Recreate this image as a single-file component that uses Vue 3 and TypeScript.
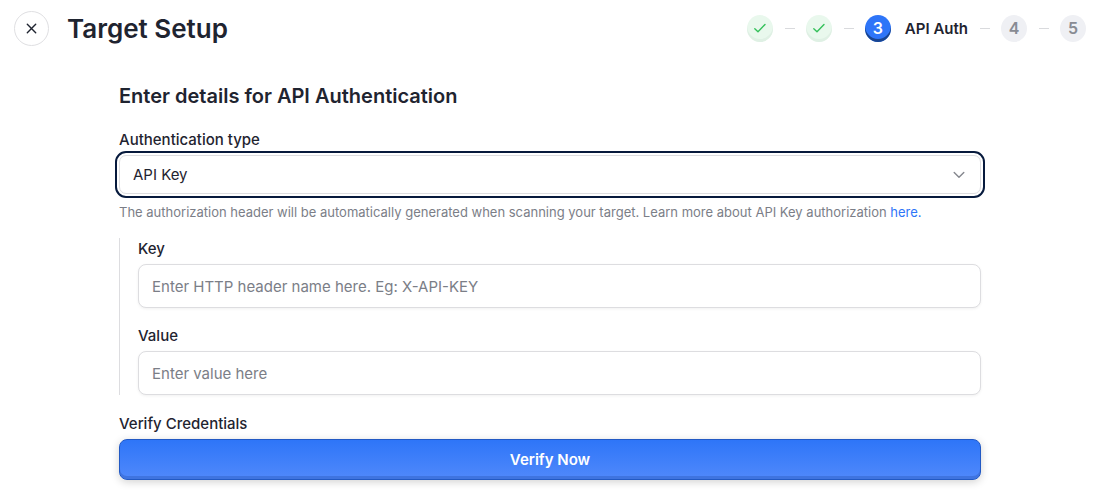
<script setup lang="ts">
import { ref } from 'vue'

interface Step {
  id: number
  state: 'done' | 'current' | 'todo'
  label?: string
}

const steps: Step[] = [
  { id: 1, state: 'done' },
  { id: 2, state: 'done' },
  { id: 3, state: 'current', label: 'API Auth' },
  { id: 4, state: 'todo' },
  { id: 5, state: 'todo' },
]

const authType = ref('API Key')
const headerName = ref('')
const headerValue = ref('')
</script>

<template>
  <div class="page">
    <header class="topbar">
      <button class="close" type="button" aria-label="Close">
        <svg width="11" height="11" viewBox="0 0 11 11" fill="none" stroke="currentColor" stroke-width="1.4" stroke-linecap="round">
          <path d="M1.3 1.3 9.7 9.7M9.7 1.3 1.3 9.7" />
        </svg>
      </button>
      <h1>Target Setup</h1>
      <ol class="steps">
        <li v-for="step in steps" :key="step.id" class="step">
          <span class="badge" :class="step.state">
            <svg v-if="step.state === 'done'" width="14" height="12" viewBox="0 0 14 12" fill="none" stroke="currentColor" stroke-width="1.4" stroke-linecap="round" stroke-linejoin="round">
              <path d="M1.8 6.8 5 9.8 12 2.4" />
            </svg>
            <template v-else>{{ step.id }}</template>
          </span>
          <span v-if="step.label" class="step-label">{{ step.label }}</span>
        </li>
      </ol>
    </header>

    <form class="form" @submit.prevent>
      <h2>Enter details for API Authentication</h2>

      <label for="auth-type">Authentication type</label>
      <div class="select-wrap">
        <select id="auth-type" v-model="authType">
          <option>API Key</option>
        </select>
        <svg class="chevron" width="12" height="8" viewBox="0 0 12 8" fill="none" stroke="currentColor" stroke-width="1.4" stroke-linecap="round" stroke-linejoin="round">
          <path d="M1.2 1.5 6 6.3 10.8 1.5" />
        </svg>
      </div>
      <p class="hint">
        The authorization header will be automatically generated when scanning your target. Learn more about API Key authorization <a href="#">here.</a>
      </p>

      <div class="group">
        <div class="field">
          <label for="key">Key</label>
          <input id="key" v-model="headerName" type="text" placeholder="Enter HTTP header name here. Eg: X-API-KEY" />
        </div>
        <div class="field">
          <label for="value">Value</label>
          <input id="value" v-model="headerValue" type="text" placeholder="Enter value here" />
        </div>
      </div>

      <label for="verify">Verify Credentials</label>
      <button id="verify" class="verify" type="submit" aria-label="Verify Now">Verify Now</button>
    </form>
  </div>
</template>

<style>
body {
  margin: 0;
  background: #fff;
}
</style>

<style scoped>
.page,
.page * {
  box-sizing: border-box;
}
.page {
  font-family: Inter, "Liberation Sans", sans-serif;
  font-size: 15px;
  color: #1f2430;
}
button,
input,
select {
  font: inherit;
}
.topbar {
  display: flex;
  align-items: center;
  padding: 11px 14px 0;
}
.close {
  display: flex;
  align-items: center;
  justify-content: center;
  flex: none;
  width: 35px;
  height: 35px;
  padding: 0;
  border: 1px solid #dfdfe2;
  border-radius: 50%;
  background: #fff;
  color: #1f2430;
}
h1 {
  margin: 0 0 0 18px;
  font-size: 26px;
  line-height: 35px;
  font-weight: 600;
}
.steps {
  display: flex;
  margin: 0 0 0 auto;
  padding: 0;
  list-style: none;
}
.step {
  display: flex;
  align-items: center;
}
.step + .step::before {
  content: "";
  width: 10px;
  height: 1px;
  margin: 0 11px 0 12px;
  background: #d9dadd;
}
.badge {
  display: flex;
  align-items: center;
  justify-content: center;
  width: 26px;
  height: 27px;
  padding-bottom: 1px;
  border-radius: 50%;
  font-size: 16px;
  line-height: 20px;
  font-weight: 600;
}
.badge.done {
  background: #e9f8ed;
  color: #35c15b;
  box-shadow: inset 0 -3px 0 #dff0e4;
}
.badge.current {
  background: #2e75f8;
  color: #fff;
  box-shadow: inset 0 -3px 0 #194591;
}
.badge.todo {
  background: #eff0f4;
  color: #888b93;
}
.step-label {
  margin-left: 14px;
  line-height: 20px;
  font-weight: 600;
}
.form {
  display: flex;
  flex-direction: column;
  margin: 0 119px;
  padding: 38px 0 24px;
}
h2 {
  margin: 0 0 21px;
  font-size: 20px;
  line-height: 24px;
  font-weight: 600;
}
label {
  display: block;
  line-height: 22px;
  font-weight: 500;
}
.select-wrap {
  display: grid;
  align-items: center;
  margin-top: 4px;
}
.select-wrap > * {
  grid-area: 1 / 1;
}
select {
  appearance: none;
  width: 100%;
  height: 39px;
  padding: 0 13px;
  border: 1px solid #dddde0;
  border-radius: 7px;
  outline: 2px solid #071a3d;
  outline-offset: 2px;
  background: #fff;
  color: #1f2430;
}
.chevron {
  justify-self: end;
  margin-right: 16px;
  color: #85878e;
  pointer-events: none;
}
.hint {
  margin: 10px 0 17px;
  font-size: 13px;
  line-height: 17px;
  color: #7b7e87;
}
.hint a {
  color: #2e75f8;
  text-decoration: none;
}
.group {
  display: flex;
  flex-direction: column;
  gap: 17px;
  margin-bottom: 18px;
  padding-left: 18px;
  border-left: 1px solid #dddde0;
}
input {
  display: block;
  width: 100%;
  height: 44px;
  margin-top: 4px;
  padding: 0 13px;
  border: 1px solid #dddde0;
  border-radius: 8px;
  background: #fff;
  color: #1f2430;
  box-shadow: 0 1px 3px rgba(0, 0, 0, 0.06);
}
input::placeholder {
  color: #7b7e87;
  opacity: 1;
}
.verify {
  height: 41px;
  margin-top: 4px;
  padding: 0;
  border: 1px solid #2259c4;
  border-radius: 8px;
  background: linear-gradient(#2e75f8, #5089fb);
  color: #fff;
  font-weight: 600;
  box-shadow: inset 0 -3px 0 #3f74e0, 0 2px 8px rgba(0, 0, 0, 0.18);
}
</style>
